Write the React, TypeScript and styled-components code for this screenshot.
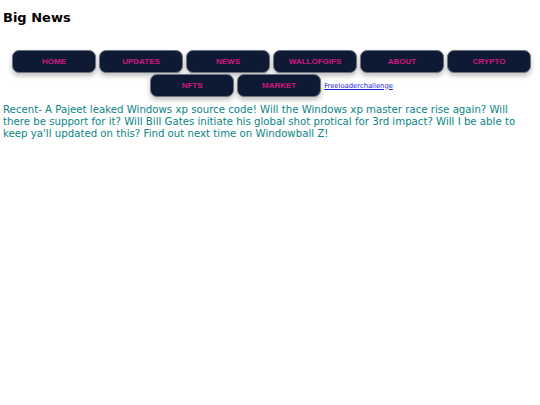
import styled, { createGlobalStyle } from "styled-components";

const GlobalStyle = createGlobalStyle`
  html, body {
    margin: 0;
    padding: 0;
    background: #ffffff;
  }
  body {
    font-family: "DejaVu Sans", Verdana, sans-serif;
  }
`;

const links = ["HOME", "UPDATES", "NEWS", "WALLOFGIFS", "ABOUT", "CRYPTO", "NFTS", "MARKET"];

export default function App() {
  return (
    <>
      <GlobalStyle />
      <Page>
        <Title>Big News</Title>
        <Nav>
          {links.map((label) => (
            <NavButton key={label} type="button">
              {label}
            </NavButton>
          ))}
          <SmallLink href="#">Freeloaderchallenge</SmallLink>
        </Nav>
        <Story>
          Recent- A Pajeet leaked Windows xp source code! Will the Windows xp master race rise again? Will
          there be support for it? Will Bill Gates initiate his global shot protical for 3rd impact? Will I be
          able to keep ya'll updated on this? Find out next time on Windowball Z!
        </Story>
      </Page>
    </>
  );
}

const Page = styled.div`
  padding: 0 3px;
`;

const Title = styled.h1`
  margin: 0;
  padding-top: 10px;
  font-size: 13px;
  line-height: 16px;
  font-weight: bold;
  color: #000;
`;

const Nav = styled.nav`
  margin-top: 24px;
  display: flex;
  flex-wrap: wrap;
  justify-content: center;
  align-items: center;
  column-gap: 3px;
  row-gap: 1px;
  padding: 0 5px 0 8px;
`;

const NavButton = styled.button`
  width: 84px;
  height: 23px;
  border: 1px solid #6f7580;
  border-radius: 7px;
  background: #0e1a33;
  color: #d0167f;
  font-family: "Liberation Sans", Arial, sans-serif;
  font-weight: bold;
  font-size: 8px;
  box-shadow: 0 3px 5px rgba(0, 0, 0, 0.25);
  cursor: pointer;
  padding: 0;
`;

const SmallLink = styled.a`
  color: #2222dd;
  font-family: "DejaVu Sans", Verdana, sans-serif;
  font-size: 6.8px;
  margin-left: 0;
  align-self: center;
`;

const Story = styled.p`
  margin: 7px 0 0;
  color: #0a8585;
  font-size: 10.2px;
  line-height: 11.8px;
`;
